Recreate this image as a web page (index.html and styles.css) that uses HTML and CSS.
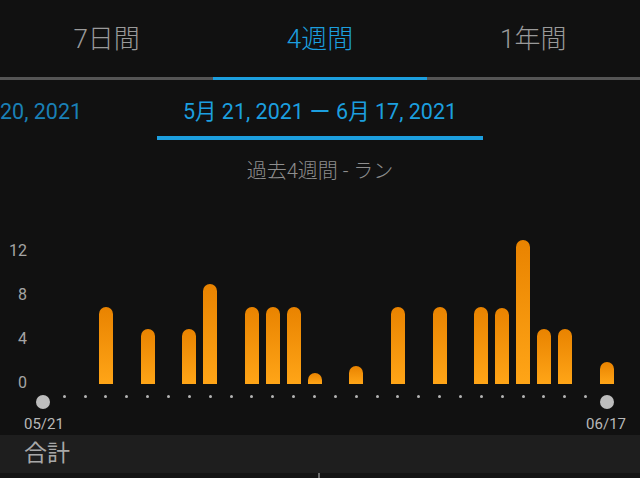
FILE: index.html
```html
<!DOCTYPE html>
<html lang="ja">
<head>
  <meta charset="UTF-8">
  <meta name="viewport" content="width=device-width, initial-scale=1.0">
  <title>4週間 - ラン</title>
  <link rel="stylesheet" href="styles.css">
</head>
<body>
  <div class="tabs">
    <div class="tab">7日間</div>
    <div class="tab active">4週間</div>
    <div class="tab">1年間</div>
  </div>

  <div class="pager">
    <div class="range prev">4月 23, 2021 ー 5月 20, 2021</div>
    <div class="range current">5月 21, 2021 ー 6月 17, 2021</div>
    <div class="range next"></div>
  </div>

  <div class="subtitle">過去4週間 - ラン</div>

  <div class="chart">
    <div class="y-axis">
      <span>12</span>
      <span>8</span>
      <span>4</span>
      <span>0</span>
    </div>
    <div class="plot">
      <div class="col"></div>
      <div class="col"></div>
      <div class="col"></div>
      <div class="col"><div class="bar" style="height:77px"></div></div>
      <div class="col"></div>
      <div class="col"><div class="bar" style="height:55px"></div></div>
      <div class="col"></div>
      <div class="col"><div class="bar" style="height:55px"></div></div>
      <div class="col"><div class="bar" style="height:100px"></div></div>
      <div class="col"></div>
      <div class="col"><div class="bar" style="height:77px"></div></div>
      <div class="col"><div class="bar" style="height:77px"></div></div>
      <div class="col"><div class="bar" style="height:77px"></div></div>
      <div class="col"><div class="bar" style="height:11px"></div></div>
      <div class="col"></div>
      <div class="col"><div class="bar" style="height:18px"></div></div>
      <div class="col"></div>
      <div class="col"><div class="bar" style="height:77px"></div></div>
      <div class="col"></div>
      <div class="col"><div class="bar" style="height:77px"></div></div>
      <div class="col"></div>
      <div class="col"><div class="bar" style="height:77px"></div></div>
      <div class="col"><div class="bar" style="height:76px"></div></div>
      <div class="col"><div class="bar" style="height:144px"></div></div>
      <div class="col"><div class="bar" style="height:55px"></div></div>
      <div class="col"><div class="bar" style="height:55px"></div></div>
      <div class="col"></div>
      <div class="col"><div class="bar" style="height:22px"></div></div>
    </div>
  </div>

  <div class="axis">
    <div class="tick"><span class="knob"></span></div>
    <div class="tick"><span class="dot"></span></div>
    <div class="tick"><span class="dot"></span></div>
    <div class="tick"><span class="dot"></span></div>
    <div class="tick"><span class="dot"></span></div>
    <div class="tick"><span class="dot"></span></div>
    <div class="tick"><span class="dot"></span></div>
    <div class="tick"><span class="dot"></span></div>
    <div class="tick"><span class="dot"></span></div>
    <div class="tick"><span class="dot"></span></div>
    <div class="tick"><span class="dot"></span></div>
    <div class="tick"><span class="dot"></span></div>
    <div class="tick"><span class="dot"></span></div>
    <div class="tick"><span class="dot"></span></div>
    <div class="tick"><span class="dot"></span></div>
    <div class="tick"><span class="dot"></span></div>
    <div class="tick"><span class="dot"></span></div>
    <div class="tick"><span class="dot"></span></div>
    <div class="tick"><span class="dot"></span></div>
    <div class="tick"><span class="dot"></span></div>
    <div class="tick"><span class="dot"></span></div>
    <div class="tick"><span class="dot"></span></div>
    <div class="tick"><span class="dot"></span></div>
    <div class="tick"><span class="dot"></span></div>
    <div class="tick"><span class="dot"></span></div>
    <div class="tick"><span class="dot"></span></div>
    <div class="tick"><span class="dot"></span></div>
    <div class="tick"><span class="knob"></span></div>
  </div>

  <div class="dates">
    <div class="date">05/21</div>
    <div class="date">06/17</div>
  </div>

  <div class="summary">合計</div>
  <div class="footer"><span class="handle"></span></div>
</body>
</html>
```

FILE: styles.css
```css
* {
  box-sizing: border-box;
  margin: 0;
  padding: 0;
}

body {
  font-family: Roboto, "Noto Sans CJK JP", sans-serif;
  background: #111111;
  color: #9e9e9e;
  width: 640px;
  height: 478px;
  overflow: hidden;
}

.tabs {
  display: flex;
}

.tab {
  flex: 1;
  height: 80px;
  line-height: 78px;
  text-align: center;
  font-size: 26px;
  font-weight: 300;
  color: #9a9a9a;
  border-bottom: 3px solid #555555;
}

.tab.active {
  color: #1c9fdf;
  border-bottom-color: #1c9fdf;
}

.pager {
  display: flex;
  justify-content: center;
  gap: 49px;
  overflow: hidden;
}

.range {
  flex-shrink: 0;
  width: 326px;
  height: 60px;
  padding: 19px 0 12px;
  line-height: 25px;
  font-size: 21.5px;
  text-align: center;
  white-space: nowrap;
  color: #1c9fdf;
}

.range.prev {
  color: #1a80b6;
}

.range.current {
  border-bottom: 4px solid #1c9fdf;
}

.subtitle {
  margin-top: 19px;
  line-height: 24px;
  font-size: 20px;
  font-weight: 300;
  text-align: center;
  color: #8e8e8e;
}

.chart {
  display: flex;
  align-items: flex-start;
  margin-top: 57px;
}

.y-axis {
  width: 27px;
  display: flex;
  flex-direction: column;
  align-items: flex-end;
  gap: 28px;
  margin: 3px 0 -7px;
  font-size: 16px;
  line-height: 16px;
  color: #a5a5a5;
}

.plot,
.axis {
  display: grid;
  grid-template-columns: repeat(28, minmax(0, 1fr));
  width: 584px;
}

.plot {
  height: 144px;
  margin-left: 6px;
  align-items: end;
}

.col {
  display: flex;
  justify-content: center;
  align-items: flex-end;
  height: 100%;
}

.bar {
  width: 14px;
  border-radius: 7px 7px 0 0;
  background: linear-gradient(to bottom, #e98300, #ffa517);
}

.axis {
  height: 26px;
  margin-left: 33px;
}

.tick {
  display: flex;
  justify-content: center;
  align-items: flex-start;
}

.dot {
  width: 3px;
  height: 3px;
  margin-top: 11px;
  border-radius: 50%;
  background: #b5b5b5;
}

.knob {
  width: 14px;
  height: 14px;
  margin-top: 11px;
  border-radius: 50%;
  background: #bdbdbd;
}

.dates {
  display: flex;
  justify-content: space-between;
  height: 25px;
  padding: 5px 14px 0 24px;
  font-size: 15px;
  line-height: 18px;
  color: #b8b8b8;
}

.summary {
  height: 38px;
  padding-left: 24px;
  line-height: 38px;
  font-size: 23px;
  color: #a8a8a8;
  background: #1e1e1e;
}

.footer {
  display: flex;
  justify-content: center;
  height: 5px;
  background: #141414;
}

.handle {
  width: 2px;
  height: 5px;
  margin-left: -2px;
  background: #6a6a6a;
}
```
